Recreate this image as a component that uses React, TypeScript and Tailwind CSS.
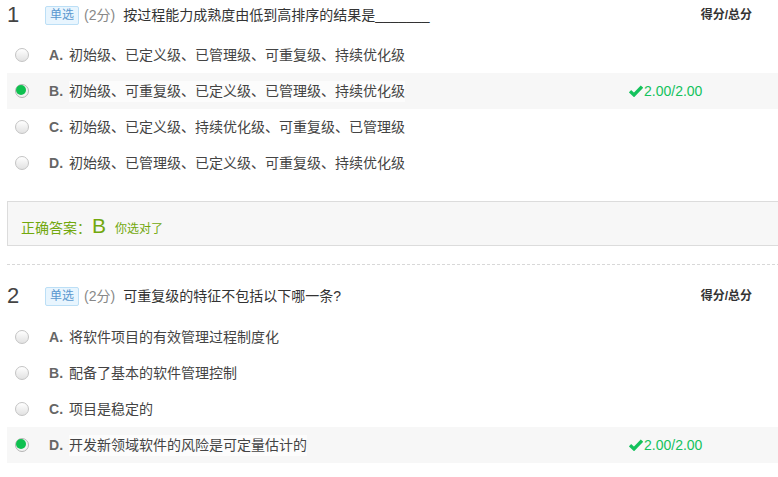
import React from "react";

const FONT = { fontFamily: '"Liberation Sans", "Noto Sans CJK SC", sans-serif' };

type Opt = { k: string; t: string };

function Radio({ on }: { on: boolean }) {
  if (on) {
    return (
      <span className="inline-block w-[14px] h-[14px] rounded-full border border-[#b5b5b5] bg-[#f2f2f2] flex items-center justify-center shrink-0">
        <span className="block w-[10px] h-[10px] rounded-full bg-[#0ec04f]" />
      </span>
    );
  }
  return (
    <span className="inline-block w-[14px] h-[14px] rounded-full border border-[#c4c4c4] bg-gradient-to-b from-[#ffffff] to-[#e2e2e2] shrink-0" />
  );
}

function Check() {
  return (
    <svg width="14" height="12" viewBox="0 0 14 12" className="mr-[1px]">
      <path d="M1 6.2 L5 9.9 L13 1.6" fill="none" stroke="#14c25d" strokeWidth="3.4" strokeLinecap="butt" strokeLinejoin="miter" />
    </svg>
  );
}

function Row({ o, sel }: { o: Opt; sel: boolean }) {
  return (
    <div className={"flex items-center h-[36px] " + (sel ? "bg-[#f7f7f7]" : "")}>
      <div className="w-[622px] flex items-center pl-[8px]">
        <Radio on={sel} />
        <span className="ml-[20px] w-[20px] font-bold text-[14px] text-[#666]">{o.k}.</span>
        <span className={"text-[14px] text-[#444] " + (sel ? "bg-[#fcfcfc]" : "")}>{o.t}</span>
      </div>
      {sel && (
        <div className="flex items-center text-[14px] text-[#14c25d]">
          <Check />
          <span>2.00/2.00</span>
        </div>
      )}
    </div>
  );
}

function Question({
  n,
  title,
  opts,
  sel,
  gap,
  answer,
}: {
  n: number;
  title: string;
  opts: Opt[];
  sel: number;
  gap: string;
  answer?: boolean;
}) {
  return (
    <div>
      <div className="h-[30px] flex items-center">
        <span className="w-[38px] text-[22px] leading-none text-[#444] -mt-[1px]">{n}</span>
        <span className="h-[19px] px-[4px] flex items-center text-[12px] text-[#5a98cf] bg-[#e8f5fe] border border-[#bcdff6] rounded-[2px]">
          单选
        </span>
        <span className="ml-[5px] text-[14px] text-[#888]">(2分)</span>
        <span className="ml-[8px] text-[14px] text-[#333]">{title}</span>
        <span className="flex-1" />
        <span className="mr-[38px] text-[12px] font-bold text-[#333]">得分/总分</span>
      </div>
      <div className={gap}>
        {opts.map((o, i) => (
          <Row key={o.k} o={o} sel={i === sel} />
        ))}
      </div>
      {answer && (
        <div className="mt-[20px] h-[45px] border border-[#dcdcdc] bg-[#f7f7f7] flex items-center pt-[7px] pl-[13px]">
          <div className="flex items-baseline text-[#72a80d]">
            <span className="text-[14px]">正确答案：</span>
            <span className="text-[21px] leading-none ml-[1px]">B</span>
            <span className="text-[12px] ml-[9px]">你选对了</span>
          </div>
        </div>
      )}
    </div>
  );
}

export default function App() {
  const q1: Opt[] = [
    { k: "A", t: "初始级、已定义级、已管理级、可重复级、持续优化级" },
    { k: "B", t: "初始级、可重复级、已定义级、已管理级、持续优化级" },
    { k: "C", t: "初始级、已定义级、持续优化级、可重复级、已管理级" },
    { k: "D", t: "初始级、已管理级、已定义级、可重复级、持续优化级" },
  ];
  const q2: Opt[] = [
    { k: "A", t: "将软件项目的有效管理过程制度化" },
    { k: "B", t: "配备了基本的软件管理控制" },
    { k: "C", t: "项目是稳定的" },
    { k: "D", t: "开发新领域软件的风险是可定量估计的" },
  ];
  return (
    <div className="w-[778px] h-[477px] overflow-hidden bg-white" style={FONT}>
      <div className="w-[790px] pl-[7px]">
        <Question
          n={1}
          title="按过程能力成熟度由低到高排序的结果是_______"
          opts={q1}
          sel={1}
          gap="mt-[7px]"
          answer
        />
        <div className="mt-[18px] border-t border-dashed border-[#d8d8d8]" />
        <div className="mt-[16px]">
          <Question
            n={2}
            title="可重复级的特征不包括以下哪一条?"
            opts={q2}
            sel={3}
            gap="mt-[8px]"
          />
        </div>
      </div>
    </div>
  );
}
